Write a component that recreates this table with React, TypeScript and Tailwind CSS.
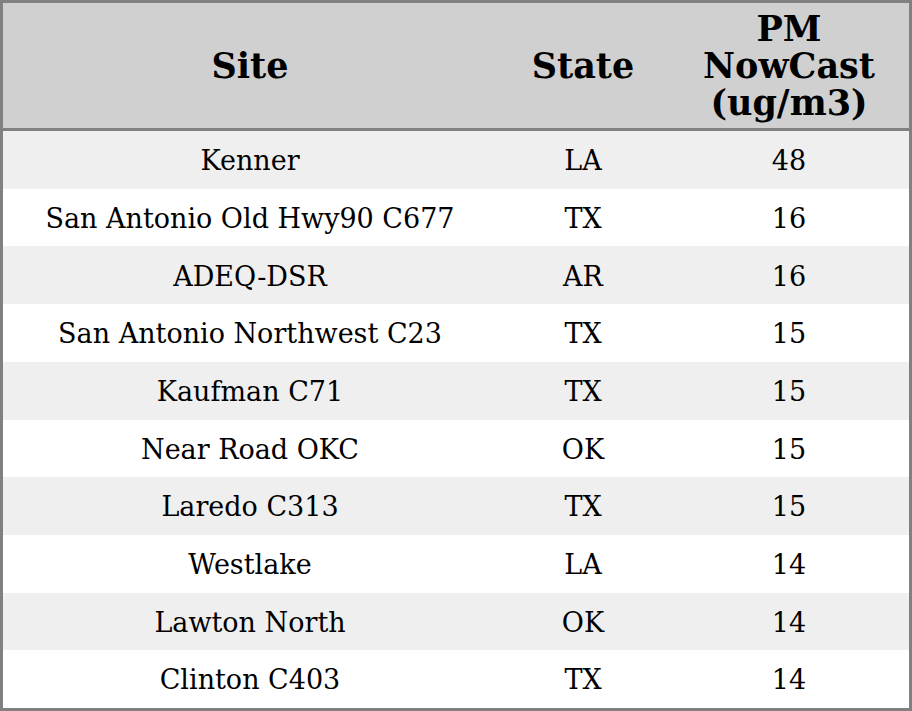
import React from 'react';

const ROWS: [string, string, number][] = [
  ['Kenner', 'LA', 48],
  ['San Antonio Old Hwy90 C677', 'TX', 16],
  ['ADEQ-DSR', 'AR', 16],
  ['San Antonio Northwest C23', 'TX', 15],
  ['Kaufman C71', 'TX', 15],
  ['Near Road OKC', 'OK', 15],
  ['Laredo C313', 'TX', 15],
  ['Westlake', 'LA', 14],
  ['Lawton North', 'OK', 14],
  ['Clinton C403', 'TX', 14],
];

const App: React.FC = () => {
  return (
    <div className="w-[912px] h-[711px] bg-white border-[3px] border-[#808080] text-black font-['DejaVu_Serif',serif] flex flex-col">
      {/* Header */}
      <div className="grid grid-cols-[494px_172px_1fr] h-[128px] bg-[#d0d0d0] border-b-[3px] border-[#808080] font-bold text-[35px] leading-[37px] text-center items-center shrink-0">
        <div>Site</div>
        <div>State</div>
        <div>PM<br />NowCast<br />(ug/m3)</div>
      </div>

      {/* Rows */}
      {ROWS.map(([site, state, val], i) => (
        <div
          key={site}
          className={`grid grid-cols-[494px_172px_1fr] flex-1 pt-[3px] text-[27px] text-center items-center ${i % 2 === 0 ? 'bg-[#efefef]' : 'bg-white'}`}
        >
          <div>{site}</div>
          <div>{state}</div>
          <div>{val}</div>
        </div>
      ))}
    </div>
  );
};

export default App;
